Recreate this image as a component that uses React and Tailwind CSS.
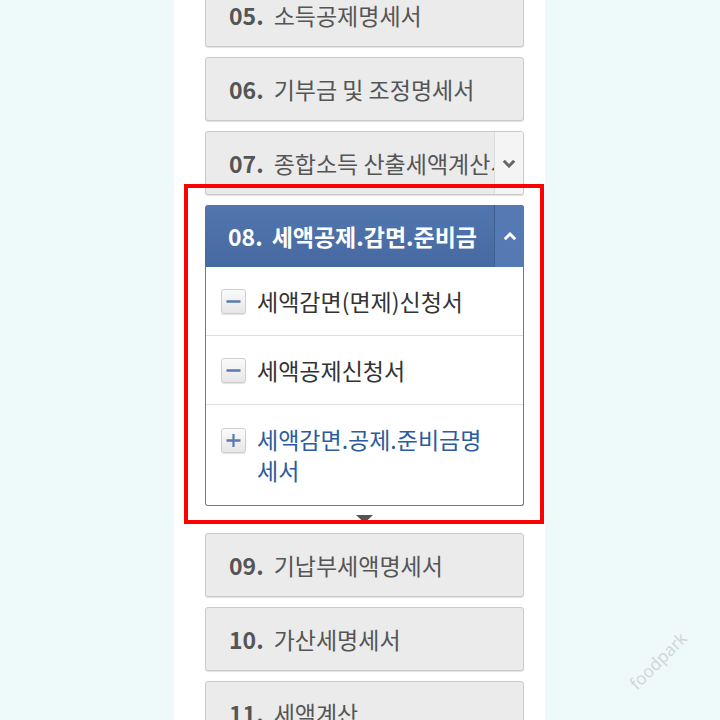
import React from 'react'

const FONT = { fontFamily: '"Noto Sans CJK KR", "Noto Sans", sans-serif' }

function Item({ num, label, arrow }) {
  return (
    <div className="flex h-[64px] overflow-hidden rounded-[3px] border border-[#cacaca] bg-[#ebebeb] shadow-[0_1px_1px_rgba(0,0,0,0.12)]">
      <div className="flex min-w-0 flex-1 items-center whitespace-nowrap pl-[23px] text-[23px] text-[#555]">
        <span className="mr-[10px] font-bold">{num}</span>
        <span className="overflow-hidden">{label}</span>
      </div>
      {arrow && (
        <div className="flex w-[29px] shrink-0 items-center justify-center border-l border-[#dcdcdc] bg-[#f4f4f4]">
          <svg width="14" height="9" viewBox="0 0 14 9">
            <path d="M1.8 1.8 L7 7 L12.2 1.8" fill="none" stroke="#666" strokeWidth="3" />
          </svg>
        </div>
      )}
    </div>
  )
}

function Box({ plus }) {
  return (
    <div className="flex h-[25px] w-[25px] shrink-0 items-center justify-center rounded-[3px] border border-[#cfcfcf] bg-gradient-to-b from-[#fbfbfb] to-[#e6e6e6] shadow-[0_1px_1px_rgba(0,0,0,0.12)]">
      <svg width="15" height="15" viewBox="0 0 15 15">
        <path d="M0.5 7.5 H14.5" stroke="#5a79ad" strokeWidth="2.5" />
        {plus && <path d="M7.5 1 V14" stroke="#5a79ad" strokeWidth="2.2" />}
      </svg>
    </div>
  )
}

function Row({ plus, children, tall, last }) {
  return (
    <div
      className={`flex gap-[11px] pl-[15px] pr-[12px] ${tall ? 'h-[100px] items-start pt-[19px]' : 'h-[69px] items-center'} ${last ? '' : 'border-b border-[#dddddd]'}`}
    >
      <div className={tall ? 'pt-[4px]' : ''}>
        <Box plus={plus} />
      </div>
      <div className={`text-[23px] leading-[31px] ${plus ? 'text-[#2b5c9c]' : 'text-[#333]'}`}>{children}</div>
    </div>
  )
}

export default function App() {
  return (
    <div className="relative flex h-[720px] w-[720px] overflow-hidden bg-[#eef9fa]" style={FONT}>
      <div className="w-[174px] shrink-0" />
      <div className="w-[371px] shrink-0 bg-white pl-[31px] pr-[21px]">
        <div className="mt-[-17px] flex flex-col gap-[10px]">
          <Item num="05." label="소득공제명세서" />
          <Item num="06." label="기부금 및 조정명세서" />
          <Item num="07." label="종합소득 산출세액계산서" arrow />
          <div>
            <div className="flex h-[62px] overflow-hidden rounded-t-[3px] bg-gradient-to-b from-[#5176ae] to-[#4769a2]">
              <div className="flex flex-1 items-center whitespace-nowrap pl-[23px] text-[23px] font-bold text-white">
                <span className="mr-[9px]">08.</span>세액공제.감면.준비금
              </div>
              <div className="flex w-[30px] items-center justify-center border-l border-[#3f5f93] bg-[#5479b3]">
                <svg width="14" height="9" viewBox="0 0 14 9">
                  <path d="M1.8 7.2 L7 2 L12.2 7.2" fill="none" stroke="#fff" strokeWidth="3" />
                </svg>
              </div>
            </div>
            <div className="rounded-b-[3px] border border-t-0 border-[#5a7cb2]">
              <Row>세액감면(면제)신청서</Row>
              <Row>세액공제신청서</Row>
              <Row plus tall last>
                세액감면.공제.준비금명
                <br />
                세서
              </Row>
            </div>
            <div className="flex justify-center pt-[9px]">
              <svg width="17" height="8" viewBox="0 0 17 8">
                <path d="M0 0 H17 L8.5 8 Z" fill="#555" />
              </svg>
            </div>
          </div>
          <Item num="09." label="기납부세액명세서" />
          <Item num="10." label="가산세명세서" />
          <Item num="11." label="세액계산" />
        </div>
      </div>
      <div className="pointer-events-none absolute left-[184px] top-[184px] h-[340px] w-[360px] border-[4px] border-[#ff0000]" />
      <div className="pointer-events-none absolute left-[622px] top-[648px] -rotate-45 text-[17px] text-[#cfd6d7]" style={{ fontFamily: '"Open Sans", sans-serif' }}>
        foodpark
      </div>
    </div>
  )
}
